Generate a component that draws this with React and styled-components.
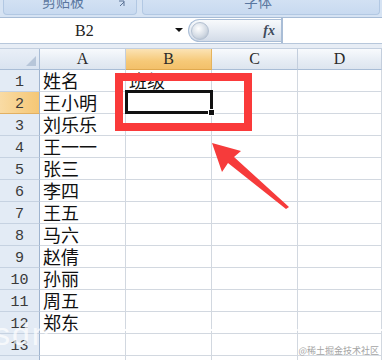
import React from "react";
import styled, { createGlobalStyle } from "styled-components";

const GlobalStyle = createGlobalStyle`
  body {
    margin: 0;
    background: #fff;
    font-family: "Noto Sans CJK SC", "Liberation Sans", sans-serif;
    overflow: hidden;
  }
`;

const Page = styled.div`
  position: relative;
  width: 382px;
  height: 360px;
  overflow: hidden;
  background: #fff;
`;

const Ribbon = styled.div`
  display: flex;
  gap: 5px;
  height: 18px;
  padding: 0 2px 0 3px;
  background: #d6e3f3;
  border-bottom: 1px solid #a7bcd6;
  overflow: hidden;
  box-sizing: border-box;
`;

const RibbonGroup = styled.div`
  position: relative;
  width: ${({ $width }) => $width}px;
  flex: ${({ $grow }) => ($grow ? 1 : "none")};
  height: 15px;
  background: linear-gradient(#d2e1f3, #c8daf0);
  border: 1px solid #b2c8e3;
  border-top: none;
  border-radius: 0 0 4px 4px;
  box-sizing: border-box;
  display: flex;
  justify-content: center;
`;

const GroupLabel = styled.span`
  margin-top: -9px;
  margin-left: ${({ $shift }) => $shift || 0}px;
  font-size: 14px;
  line-height: 20px;
  color: #5a77a0;
`;

const Launcher = styled.svg`
  position: absolute;
  right: 10px;
  top: 0;
`;

const FormulaBar = styled.div`
  display: flex;
  height: 25px;
  background: #fff;
  border-bottom: 1px solid #b7c7db;
`;

const NameBox = styled.div`
  width: 188px;
  display: flex;
  align-items: center;
  position: relative;
  font-family: "Liberation Serif", serif;
  font-size: 16px;
  color: #222;
  padding-left: 75px;
  box-sizing: border-box;
`;

const DropArrow = styled.span`
  position: absolute;
  right: 5px;
  top: 10px;
  width: 0;
  height: 0;
  border-left: 4px solid transparent;
  border-right: 4px solid transparent;
  border-top: 4px solid #111;
`;

const FxButton = styled.div`
  width: 93px;
  margin: 1px 0;
  display: flex;
  align-items: center;
  justify-content: space-between;
  padding: 0 6px 0 2px;
  box-sizing: border-box;
  border: 1px solid #a9bdd6;
  border-right: none;
  border-radius: 12px 0 0 12px;
  background: linear-gradient(#f8fafc, #e4eaf2 55%, #d3dce8);
`;

const Knob = styled.span`
  width: 16px;
  height: 16px;
  border-radius: 50%;
  background: radial-gradient(circle at 40% 35%, #ffffff, #d0d8e2 60%, #a3b0c0);
  border: 1px solid #b4c1d2;
`;

const Fx = styled.span`
  font-family: "Liberation Serif", serif;
  font-style: italic;
  font-weight: bold;
  font-size: 14px;
  color: #3d4a5c;
`;

const FormulaInput = styled.div`
  flex: 1;
  border-left: 2px solid #a9bdd6;
  background: #fff;
`;

const Band = styled.div`
  height: 4px;
  background: #e7edf5;
  border-bottom: 1px solid #c3cfdf;
`;

const Sheet = styled.div`
  display: grid;
  grid-template-columns: 40px 86px 86px 86px 1fr;
  grid-template-rows: 21px;
  grid-auto-rows: 22px;
`;

const Corner = styled.div`
  position: relative;
  background: linear-gradient(#e9eff7, #d9e3f0);
  border-right: 1px solid #a9bdd6;
  border-bottom: 1px solid #a9bdd6;
  &::after {
    content: "";
    position: absolute;
    right: 3px;
    bottom: 3px;
    border-left: 10px solid transparent;
    border-bottom: 10px solid #b7c6d9;
  }
`;

const ColHeader = styled.div`
  display: flex;
  align-items: center;
  justify-content: center;
  font-family: "Liberation Serif", serif;
  font-size: 16px;
  color: #2a2a2a;
  background: ${({ $active }) =>
    $active
      ? "linear-gradient(#fbe3b5, #f6c978 60%, #f3c06a)"
      : "linear-gradient(#f8fafd, #e6ecf4 60%, #dde5ef)"};
  border-right: 1px solid ${({ $active }) => ($active ? "#e5b35c" : "#c3cedd")};
  border-bottom: 1px solid ${({ $active }) => ($active ? "#e0a94f" : "#a9bdd6")};
`;

const RowHeader = styled.div`
  display: flex;
  align-items: center;
  justify-content: center;
  padding-top: 4px;
  box-sizing: border-box;
  font-family: "Liberation Mono", monospace;
  font-size: 15px;
  color: #3a3a3a;
  background: ${({ $active }) =>
    $active ? "linear-gradient(90deg, #f9dba4, #f5c775)" : "#e3ebf5"};
  border-right: 1px solid #9fb4cf;
  border-bottom: 1px solid ${({ $active }) => ($active ? "#e2b062" : "#c6d2e1")};
`;

const Cell = styled.div`
  display: flex;
  align-items: flex-end;
  padding-left: 3px;
  font-size: 18px;
  line-height: 22px;
  color: #111;
  white-space: nowrap;
  border-right: 1px solid #d2d8e0;
  border-bottom: 1px solid #d2d8e0;
  overflow: visible;
`;

const RedBox = styled.div`
  position: absolute;
  left: 115px;
  top: 73px;
  width: 137px;
  height: 58px;
  box-sizing: border-box;
  border: 8px solid #fa3a3a;
`;

const Selection = styled.div`
  position: absolute;
  left: 125px;
  top: 90px;
  width: 88px;
  height: 24px;
  box-sizing: border-box;
  border: 3px solid #111;
  &::after {
    content: "";
    position: absolute;
    right: -5px;
    bottom: -5px;
    width: 5px;
    height: 5px;
    background: #111;
    border: 1px solid #fff;
  }
`;

const Arrow = styled.svg`
  position: absolute;
  left: 0;
  top: 0;
`;

const CsdnMark = styled.div`
  position: absolute;
  left: -6px;
  top: 316px;
  font-family: "Liberation Sans", sans-serif;
  font-size: 32px;
  color: rgba(255, 255, 255, 0.7);
  letter-spacing: 2px;
`;

const DashLine = styled.div`
  position: absolute;
  left: 120px;
  right: 0;
  top: 329px;
  border-top: 2px dashed rgba(255, 255, 255, 0.9);
`;

const Watermark = styled.div`
  position: absolute;
  right: 3px;
  bottom: 3px;
  font-size: 9px;
  color: #a4a4a4;
  text-shadow: 0 0 2px #fff;
`;

const names = [
  "姓名", "王小明", "刘乐乐", "王一一", "张三", "李四", "王五",
  "马六", "赵倩", "孙丽", "周五", "郑东", "", "",
];

export default function App() {
  return (
    <Page>
      <GlobalStyle />
      <Ribbon>
        <RibbonGroup $width={134}>
          <GroupLabel $shift={-14}>剪贴板</GroupLabel>
          <Launcher width="8" height="8" viewBox="0 0 8 8">
            <path d="M1 1h5v5" fill="none" stroke="#5a7396" strokeWidth="1" />
            <path d="M2 6l4-4" stroke="#5a7396" strokeWidth="1" />
          </Launcher>
        </RibbonGroup>
        <RibbonGroup $grow>
          <GroupLabel $shift={-6}>字体</GroupLabel>
        </RibbonGroup>
      </Ribbon>

      <FormulaBar>
        <NameBox>
          B2
          <DropArrow />
        </NameBox>
        <FxButton>
          <Knob />
          <Fx>fx</Fx>
        </FxButton>
        <FormulaInput />
      </FormulaBar>
      <Band />

      <Sheet>
        <Corner />
        {["A", "B", "C", "D"].map((c) => (
          <ColHeader key={c} $active={c === "B"}>
            {c}
          </ColHeader>
        ))}
        {names.map((name, i) => (
          <React.Fragment key={i}>
            <RowHeader $active={i === 1}>{i + 1}</RowHeader>
            <Cell>{name}</Cell>
            <Cell>{i === 0 ? "班级" : ""}</Cell>
            <Cell />
            <Cell />
          </React.Fragment>
        ))}
      </Sheet>

      <Selection />
      <RedBox />
      <Arrow width="382" height="360" viewBox="0 0 382 360">
        <polygon
          points="212,143 241,151 234,157 289,207 286,209 228,163 222,172"
          fill="#f63b3b"
        />
      </Arrow>
      <CsdnMark>sdn</CsdnMark>
      <DashLine />
      <Watermark>@稀土掘金技术社区</Watermark>
    </Page>
  );
}
